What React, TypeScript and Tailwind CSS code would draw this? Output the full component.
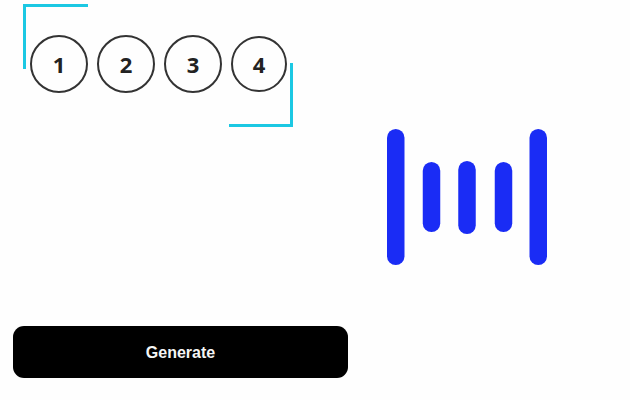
import React from 'react';

const steps = ['1', '2', '3', '4'];

const Step = ({ label, small }: { label: string; small?: boolean }) => (
  <div
    className={`flex shrink-0 items-center justify-center rounded-full border-2 border-[#333333] font-['Noto_Sans',sans-serif] text-[22px] font-bold text-[#222222] ${
      small ? 'h-[56px] w-[56px]' : 'h-[58px] w-[58px]'
    }`}
  >
    {label}
  </div>
);

const WaveLogo = () => (
  <svg width="160" height="136" viewBox="0 0 160 136" fill="none" stroke="#1a2cf5" strokeWidth="17.5" strokeLinecap="round">
    <line x1="8.75" y1="8.75" x2="8.75" y2="127.25" />
    <line x1="44.5" y1="41.75" x2="44.5" y2="94.25" />
    <line x1="80" y1="40.75" x2="80" y2="96.25" />
    <line x1="116.5" y1="41.75" x2="116.5" y2="94.25" />
    <line x1="151.25" y1="8.75" x2="151.25" y2="127.25" />
  </svg>
);

export default function App() {
  return (
    <div className="flex h-[400px] w-[630px] overflow-hidden bg-[#fefefe]">
      <div className="flex w-[348px] shrink-0 flex-col justify-between pb-[22px] pl-[13px] pt-[4px]">
        <div className="relative ml-[10px] h-[123px] w-[270px] pl-[7px] pt-[31px]">
          <div className="absolute left-0 top-0 h-[65px] w-[65px] border-l-[3px] border-t-[3px] border-[#1cc8e3]" />
          <div className="absolute bottom-0 right-0 h-16 w-16 border-b-[3px] border-r-[3px] border-[#1cc8e3]" />
          <div className="flex items-center gap-[9px]">
            {steps.map((s) => (
              <Step key={s} label={s} small={s === '4'} />
            ))}
          </div>
        </div>
        <button className="flex h-[52px] w-[335px] items-center justify-center rounded-[11px] bg-black pt-px font-['Liberation_Sans',sans-serif] text-[16px] font-bold text-[#f5f5f5]">
          Generate
        </button>
      </div>
      <div className="flex flex-1 items-start pl-[39px] pt-[129px]">
        <WaveLogo />
      </div>
    </div>
  );
}
